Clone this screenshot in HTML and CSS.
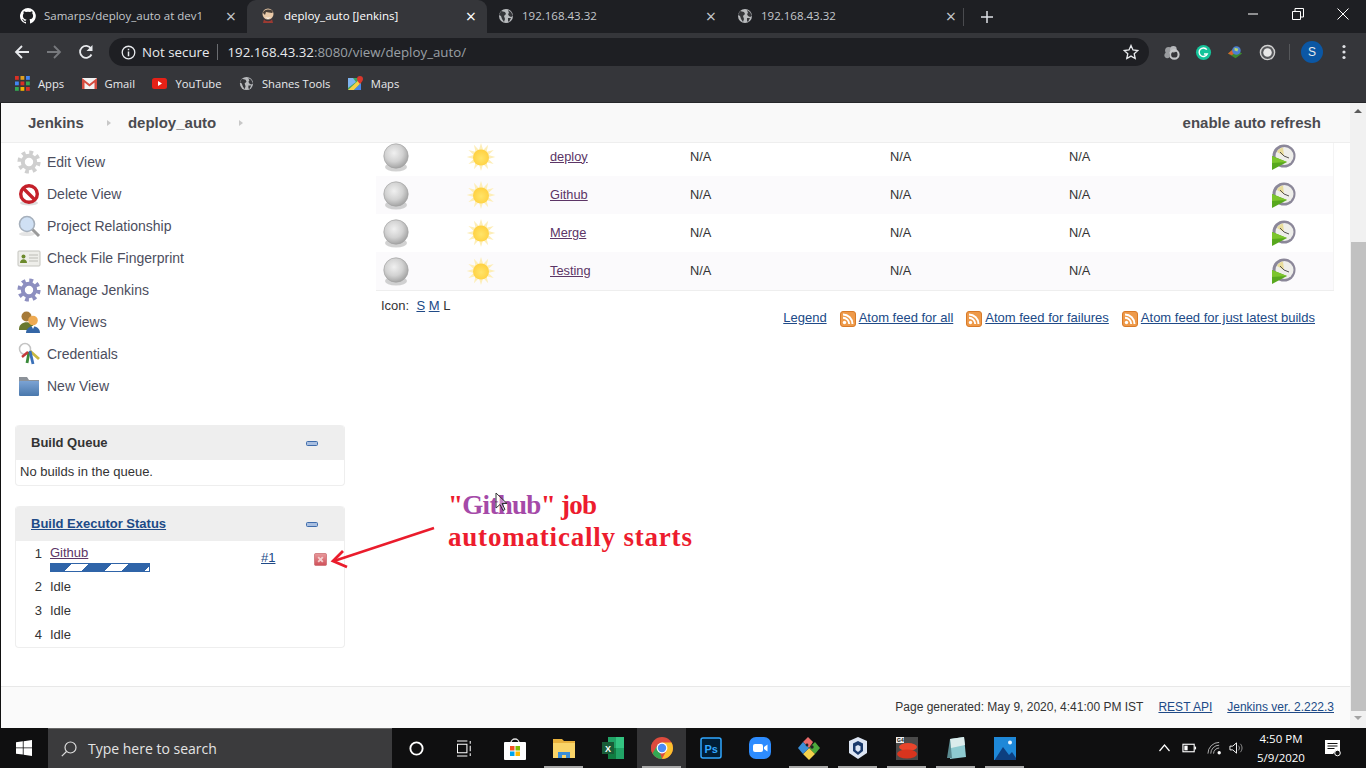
FILE: index.html
```html
<!DOCTYPE html>
<html lang="en">
<head>
  <meta charset="UTF-8">
  <title>deploy_auto [Jenkins]</title>
  <link rel="stylesheet" href="styles.css">
</head>
<body>
<svg class="defs">
  <defs>
    <radialGradient id="ballGrad" cx="42%" cy="38%" r="65%"><stop offset="0" stop-color="#f0f0f0"/><stop offset="0.55" stop-color="#d2d2d2"/><stop offset="1" stop-color="#a0a0a0"/></radialGradient>
    <radialGradient id="sunGrad" cx="50%" cy="55%" r="55%"><stop offset="0" stop-color="#ffe468"/><stop offset="1" stop-color="#ffd040"/></radialGradient>
    <linearGradient id="folderGrad" x1="0" y1="0" x2="0" y2="1"><stop offset="0" stop-color="#7ba3d4"/><stop offset="1" stop-color="#4a78ac"/></linearGradient>
    <linearGradient id="stopGrad" x1="0" y1="0" x2="0" y2="1"><stop offset="0" stop-color="#e89a9c"/><stop offset="1" stop-color="#cf4f58"/></linearGradient>
    <symbol id="globe" viewBox="0 0 16 16">
      <circle cx="8" cy="8" r="7" fill="#b8babd"/>
      <path d="M3 3l4 1 1 2-2 2 1 3-1 3-2-3-1-3-2-1zM10 2l3 2 2 4-2 1-2-1-1-2 1-1zM10 10l3 0-2 4-1-1z" fill="#35363a"/>
    </symbol>
    <symbol id="gear" viewBox="0 0 24 24">
      <circle cx="12" cy="12" r="9.400" fill="none" stroke="currentColor" stroke-width="4.400" stroke-dasharray="3.700 3.680"/>
      <circle cx="12" cy="12" r="6.200" fill="none" stroke="currentColor" stroke-width="4"/>
      <circle cx="12" cy="12" r="3.600" fill="#fff"/>
    </symbol>
    <symbol id="ball" viewBox="0 0 26 29">
      <ellipse cx="13" cy="24" rx="11" ry="4.500" fill="#b4b4b4" opacity="0.600"/>
      <circle cx="13" cy="13" r="12.200" fill="url(#ballGrad)" stroke="#a4a4a4" stroke-width="0.700"/>
    </symbol>
    <symbol id="sun" viewBox="0 0 30 30">
      <path d="M15 1l2.200 7 5-5.200-1.600 7 7.100-1.800-5.300 5 7 2-7 2 5.300 5-7.100-1.800 1.600 7-5-5.200-2.200 7-2.100-7-5 5.200 1.600-7-7.100 1.800 5.300-5-7-2 7-2-5.300-5 7.100 1.800-1.600-7 5 5.200z" fill="#fdeeb8"/>
      <circle cx="15" cy="15.500" r="8" fill="url(#sunGrad)"/>
    </symbol>
    <symbol id="clock" viewBox="0 0 26 26">
      <circle cx="13" cy="12" r="11.500" fill="#8b8799"/>
      <circle cx="13.500" cy="12" r="9" fill="#eeeeea"/>
      <path d="M13 12L12 3.500A8.500 8.500 0 0 0 6 8z" fill="#e8dc9a"/>
      <path d="M13 12L9 8M13 12l5 2" stroke="#55524f" stroke-width="1"/>
      <path d="M1 12l15 6L1 26z" fill="#58a81e"/>
      <path d="M1 12l15 6-15 1z" fill="#7cc52c"/>
    </symbol>
    <symbol id="atom" viewBox="0 0 16 16">
      <rect x="0.500" y="0.500" width="15" height="15" rx="2.500" fill="#ee9a4a" stroke="#d87a28"/>
      <circle cx="4.500" cy="11.500" r="1.700" fill="#fff"/>
      <path d="M3 6.800a6.200 6.200 0 0 1 6.200 6.200M3 3.500a9.500 9.500 0 0 1 9.500 9.500" fill="none" stroke="#fff" stroke-width="1.900"/>
    </symbol>
    <symbol id="minus" viewBox="0 0 12 5">
      <rect x="0.500" y="0.500" width="11" height="4" rx="1" fill="#a9bfe0" stroke="#3f6cab"/>
    </symbol>
  </defs>
</svg>

<div class="screen">
  <div class="tabstrip">
    <div class="tab">
      <svg class="tab-icon" viewBox="0 0 16 16"><path fill="#fff" d="M8 0a8 8 0 0 0-2.500 15.600c.4.100.5-.200.500-.400v-1.400c-2.200.5-2.700-1-2.700-1-.4-.900-.9-1.200-.9-1.200-.7-.500.100-.5.100-.5.800.100 1.200.8 1.200.8.700 1.200 1.900.9 2.300.7.100-.5.300-.9.500-1.100-1.800-.2-3.600-.9-3.600-4 0-.9.300-1.600.8-2.100-.1-.2-.4-1 .1-2.100 0 0 .7-.2 2.200.8a7.500 7.500 0 0 1 4 0c1.500-1 2.200-.8 2.200-.8.400 1.100.2 1.900.1 2.100.5.600.8 1.300.8 2.100 0 3.100-1.900 3.700-3.700 3.900.3.300.6.800.6 1.500v2.200c0 .2.100.5.600.4A8 8 0 0 0 8 0z"/></svg>
      <span class="tab-title">Samarps/deploy_auto at dev1</span>
      <span class="tab-close">×</span>
    </div>
    <div class="tab tab-active">
      <svg class="tab-icon" viewBox="0 0 16 16"><circle cx="8" cy="6" r="5.500" fill="#e8c9a8"/><path d="M3 5c0-4 9-5 10-1l-1 1-6-1-1 3z" fill="#4a4038"/><path d="M4 11c1 3 7 3 8 0l1 4H3z" fill="#9c3a32"/><path d="M5 9c2 1 4 1 6 0l-3 2z" fill="#fff"/></svg>
      <span class="tab-title">deploy_auto [Jenkins]</span>
      <span class="tab-close">×</span>
    </div>
    <div class="tab">
      <svg class="tab-icon"><use href="#globe"/></svg>
      <span class="tab-title">192.168.43.32</span>
      <span class="tab-close">×</span>
    </div>
    <div class="tab tab-last">
      <svg class="tab-icon"><use href="#globe"/></svg>
      <span class="tab-title">192.168.43.32</span>
      <span class="tab-close">×</span>
    </div>
    <svg class="new-tab" viewBox="0 0 12 12"><path d="M6 0v12M0 6h12" stroke="#dee1e6" stroke-width="1.500"/></svg>
    <div class="win-controls">
      <svg viewBox="0 0 12 12"><path d="M1 6h10" stroke="#fff"/></svg>
      <svg viewBox="0 0 12 12"><path d="M.5 3.500h8v8h-8zM3 3.500V.5h8.500V9H8.500" fill="none" stroke="#fff"/></svg>
      <svg viewBox="0 0 12 12"><path d="M.5.500l11 11M11.500.500l-11 11" stroke="#fff"/></svg>
    </div>
  </div>

  <div class="toolbar">
    <svg class="nav-btn" viewBox="0 0 16 16"><path d="M15 8H2M8 2L2 8l6 6" fill="none" stroke="#e8eaed" stroke-width="1.800"/></svg>
    <svg class="nav-btn" viewBox="0 0 16 16"><path d="M1 8h13M8 2l6 6-6 6" fill="none" stroke="#77797d" stroke-width="1.800"/></svg>
    <svg class="nav-btn" viewBox="0 0 16 16"><path d="M13.500 10.500A6 6 0 1 1 13 4.500" fill="none" stroke="#e8eaed" stroke-width="1.800"/><path d="M14.500 1v6h-6z" fill="#e8eaed"/></svg>
    <div class="omnibox">
      <svg class="info-icon" viewBox="0 0 16 16"><circle cx="8" cy="8" r="6.700" fill="none" stroke="#e8eaed" stroke-width="1.400"/><path d="M8 7v5M8 4v1.700" stroke="#e8eaed" stroke-width="1.600"/></svg>
      <span class="not-secure">Not secure</span>
      <span class="url"><span class="url-host">192.168.43.32</span>:8080/view/deploy_auto/</span>
      <svg class="star" viewBox="0 0 16 16"><path d="M8 1.500l2 4.500 4.800.5-3.600 3.200 1 4.800L8 12.100l-4.200 2.400 1-4.800L1.200 6.500 6 6z" fill="none" stroke="#e8eaed" stroke-width="1.300"/></svg>
    </div>
    <div class="extensions">
      <svg viewBox="0 0 18 18"><circle cx="6" cy="7" r="3.800" fill="#9a9c9f"/><circle cx="11" cy="5.500" r="3.500" fill="#b5b7ba"/><circle cx="12" cy="11" r="4.500" fill="none" stroke="#c4c6c9" stroke-width="2.200"/><circle cx="4.500" cy="12" r="3" fill="#9a9c9f"/></svg>
      <svg viewBox="0 0 18 18"><circle cx="9" cy="9" r="8" fill="#15c39a"/><path d="M12.500 6A4.500 4.500 0 1 0 13 10.500H9.500" fill="none" stroke="#fff" stroke-width="1.500"/></svg>
      <svg viewBox="0 0 18 18"><path d="M1 10l6-5 9 5-7 5z" fill="#3c8a2e"/><path d="M1 10l6-5 2 4-4 3z" fill="#d8632a"/><circle cx="10" cy="7" r="4.500" fill="#4c7fd0"/><path d="M8 4l4 1-1 3-3-1z" fill="#b8d870"/></svg>
      <svg class="ext-last" viewBox="0 0 18 18"><circle cx="9" cy="9" r="7.500" fill="#55575a" stroke="#d0d0d0" stroke-width="1.500"/><circle cx="9" cy="9" r="4.500" fill="#e8e8e8"/></svg>
      <span class="ext-sep"></span>
      <span class="avatar">S</span>
      <svg class="menu-dots" viewBox="0 0 4 16"><circle cx="2" cy="2.500" r="1.600" fill="#dfe1e5"/><circle cx="2" cy="8" r="1.600" fill="#dfe1e5"/><circle cx="2" cy="13.500" r="1.600" fill="#dfe1e5"/></svg>
    </div>
  </div>

  <div class="bookmarks">
    <span class="bookmark">
      <svg viewBox="0 0 15 15"><rect width="3.800" height="3.800" x="0" y="0" fill="#d93025"/><rect width="3.800" height="3.800" x="5.500" y="0" fill="#e0a020"/><rect width="3.800" height="3.800" x="11" y="0" fill="#4285f4"/><rect width="3.800" height="3.800" x="0" y="5.500" fill="#4285f4"/><rect width="3.800" height="3.800" x="5.500" y="5.500" fill="#d93025"/><rect width="3.800" height="3.800" x="11" y="5.500" fill="#34a853"/><rect width="3.800" height="3.800" x="0" y="11" fill="#34a853"/><rect width="3.800" height="3.800" x="5.500" y="11" fill="#f4b400"/><rect width="3.800" height="3.800" x="11" y="11" fill="#d93025"/></svg>
      Apps
    </span>
    <span class="bookmark">
      <svg viewBox="0 0 15 15"><rect x="0" y="2" width="15" height="11" fill="#f2f2f2"/><path d="M0 2l7.500 6L15 2v11h-2.500V6.500L7.500 10.500 2.500 6.500V13H0z" fill="#d54c3f"/></svg>
      Gmail
    </span>
    <span class="bookmark">
      <svg viewBox="0 0 15 15"><rect x="0" y="2" width="15" height="11" rx="2.500" fill="#e62117"/><path d="M6 5l4 2.500L6 10z" fill="#fff"/></svg>
      YouTube
    </span>
    <span class="bookmark">
      <svg viewBox="0 0 16 16"><use href="#globe"/></svg>
      Shanes Tools
    </span>
    <span class="bookmark">
      <svg viewBox="0 0 15 15"><rect x="0" y="2" width="13" height="12" fill="#3fa45b"/><path d="M0 14L13 2v5L6 14z" fill="#f7d046"/><path d="M0 2h5l3 4-8 6z" fill="#7fb4f0"/><path d="M6 14l7-7v7z" fill="#4a86e8"/><path d="M12 0a3 3 0 0 1 3 3c0 2-3 5-3 5S9 5 9 3a3 3 0 0 1 3-3z" fill="#d8382c"/></svg>
      Maps
    </span>
  </div>

  <div class="page">
    <div class="page-main">
      <div class="breadcrumbs">
        <span class="crumb">Jenkins</span>
        <span class="crumb-arrow"></span>
        <span class="crumb">deploy_auto</span>
        <span class="crumb-arrow"></span>
        <span class="auto-refresh">enable auto refresh</span>
      </div>

      <div class="page-body">
        <div class="side-panel">
          <ul class="tasks">
            <li><svg class="task-icon icon-grey"><use href="#gear"/></svg>Edit View</li>
            <li>
              <svg class="task-icon" viewBox="0 0 24 24"><ellipse cx="12" cy="21" rx="9" ry="2.500" fill="#ddd"/><circle cx="12" cy="12" r="8.300" fill="#fff" stroke="#c4202a" stroke-width="3.400"/><path d="M6 6l12 12" stroke="#c4202a" stroke-width="3.400"/></svg>
              Delete View
            </li>
            <li>
              <svg class="task-icon" viewBox="0 0 24 24"><ellipse cx="10" cy="20" rx="8" ry="2" fill="#e4e4e4"/><path d="M15 15l7 7" stroke="#9a9a9a" stroke-width="3"/><circle cx="10" cy="10" r="7.500" fill="#cfe0f4" stroke="#a6b0bc" stroke-width="1.600"/></svg>
              Project Relationship
            </li>
            <li>
              <svg class="task-icon" viewBox="0 0 24 24"><rect x="1" y="5" width="22" height="15" rx="1" fill="#eeeeea" stroke="#c4c4be"/><circle cx="6.500" cy="10.500" r="2" fill="#6c8a2c"/><path d="M3 17c0-5 7-5 7 0z" fill="#6c8a2c"/><path d="M12 9h9M12 12h9M12 15h9" stroke="#bcbcb6"/></svg>
              Check File Fingerprint
            </li>
            <li><svg class="task-icon icon-purple"><use href="#gear"/></svg>Manage Jenkins</li>
            <li>
              <svg class="task-icon" viewBox="0 0 24 24"><circle cx="9.500" cy="6.500" r="5" fill="#a67a38"/><path d="M2 19c0-9 15-9 15 0v1H2z" fill="#68782e"/><circle cx="16" cy="10.500" r="4.800" fill="#eeaa52"/><path d="M9 23c0-9 14-9 14 0z" fill="#3466a6"/><path d="M14.500 16l1.500 3 1.500-3z" fill="#fff"/></svg>
              My Views
            </li>
            <li>
              <svg class="task-icon" viewBox="0 0 24 24"><circle cx="8" cy="7" r="5.500" fill="none" stroke="#c4c4c4" stroke-width="1.500"/><path d="M13 9l9 8" stroke="#c8b840" stroke-width="2.800"/><path d="M12 10l-2 11" stroke="#3a8a3a" stroke-width="2.800"/><path d="M13 9l3 13" stroke="#3a70b8" stroke-width="2.800"/><path d="M11 10l-6 5" stroke="#c43a3a" stroke-width="2.400"/></svg>
              Credentials
            </li>
            <li>
              <svg class="task-icon" viewBox="0 0 24 24"><path d="M2 3h8l2 3h10v3H2z" fill="#8c9299"/><rect x="2" y="7" width="20" height="15" rx="1" fill="url(#folderGrad)"/></svg>
              New View
            </li>
          </ul>

          <div class="pane">
            <div class="pane-header">
              <span class="pane-title">Build Queue</span>
              <svg class="pane-toggle"><use href="#minus"/></svg>
            </div>
            <div class="queue-text">No builds in the queue.</div>
          </div>

          <div class="pane">
            <div class="pane-header">
              <a class="pane-title pane-link">Build Executor Status</a>
              <svg class="pane-toggle"><use href="#minus"/></svg>
            </div>
            <div class="executors">
              <div class="executor executor-busy">
                <span class="exec-num">1</span>
                <div class="exec-job">
                  <a class="job-link">Github</a>
                  <div class="progress"></div>
                </div>
                <a class="exec-build">#1</a>
                <svg class="exec-stop" viewBox="0 0 14 14"><rect x="0.500" y="0.500" width="13" height="13" rx="1.500" fill="url(#stopGrad)" stroke="#cf7a80"/><path d="M4.500 4.500l5 5M9.500 4.500l-5 5" stroke="#f4d0d0" stroke-width="2"/></svg>
              </div>
              <div class="executor"><span class="exec-num">2</span><span>Idle</span></div>
              <div class="executor"><span class="exec-num">3</span><span>Idle</span></div>
              <div class="executor"><span class="exec-num">4</span><span>Idle</span></div>
            </div>
          </div>
        </div>

        <div class="main-panel">
          <table class="projects">
            <colgroup>
              <col class="col-icon"><col class="col-icon"><col class="col-name">
              <col class="col-success"><col class="col-fail"><col class="col-duration"><col class="col-build">
            </colgroup>
            <tr>
              <td><svg class="ball"><use href="#ball"/></svg></td>
              <td><svg class="sun"><use href="#sun"/></svg></td>
              <td><a class="job-link">deploy</a></td>
              <td>N/A</td><td>N/A</td><td>N/A</td>
              <td><svg class="clock"><use href="#clock"/></svg></td>
            </tr>
            <tr class="row-alt">
              <td><svg class="ball"><use href="#ball"/></svg></td>
              <td><svg class="sun"><use href="#sun"/></svg></td>
              <td><a class="job-link">Github</a></td>
              <td>N/A</td><td>N/A</td><td>N/A</td>
              <td><svg class="clock"><use href="#clock"/></svg></td>
            </tr>
            <tr>
              <td><svg class="ball"><use href="#ball"/></svg></td>
              <td><svg class="sun"><use href="#sun"/></svg></td>
              <td><a class="job-link">Merge</a></td>
              <td>N/A</td><td>N/A</td><td>N/A</td>
              <td><svg class="clock"><use href="#clock"/></svg></td>
            </tr>
            <tr class="row-alt">
              <td><svg class="ball"><use href="#ball"/></svg></td>
              <td><svg class="sun"><use href="#sun"/></svg></td>
              <td><a class="job-link">Testing</a></td>
              <td>N/A</td><td>N/A</td><td>N/A</td>
              <td><svg class="clock"><use href="#clock"/></svg></td>
            </tr>
          </table>
          <div class="icon-size">Icon:&nbsp; <a>S</a> <a>M</a> <span>L</span></div>
          <div class="feeds">
            <a class="legend">Legend</a>
            <span class="feed"><svg class="atom"><use href="#atom"/></svg><a>Atom feed for all</a></span>
            <span class="feed"><svg class="atom"><use href="#atom"/></svg><a>Atom feed for failures</a></span>
            <span class="feed"><svg class="atom"><use href="#atom"/></svg><a>Atom feed for just latest builds</a></span>
          </div>
        </div>
      </div>

      <div class="page-footer">
        <span>Page generated: May 9, 2020, 4:41:00 PM IST</span>
        <a>REST API</a>
        <a>Jenkins ver. 2.222.3</a>
      </div>
    </div>

    <div class="scrollbar">
      <span class="scroll-up"></span>
      <span class="scroll-thumb"></span>
      <span class="scroll-down"></span>
    </div>

    <div class="note">
      <div class="note-first">"<span class="note-job">Github</span>" job</div>
      <div class="note-second">automatically starts</div>
    </div>
    <svg class="note-arrow" viewBox="0 0 110 50"><path d="M104 5L4 38" stroke="#ea1c2c" stroke-width="2.400"/><path d="M13 28L3 38l14 6" fill="none" stroke="#ea1c2c" stroke-width="2.800"/></svg>
    <svg class="cursor" viewBox="0 0 12 20"><path d="M1 1v15l4-3.500 3 6 2-1-3-6h5z" fill="#fff" fill-opacity="0.350" stroke="#333" stroke-width="1"/></svg>
  </div>

  <div class="taskbar">
    <div class="start">
      <svg viewBox="0 0 16 16"><path fill="#fff" d="M0 2.200l6.800-.9v6.200H0zM7.600 1.200L16 0v7.500H7.600zM0 8.300h6.800v6.300L0 13.700zM7.600 8.300H16V16l-8.400-1.200z"/></svg>
    </div>
    <div class="search">
      <svg viewBox="0 0 16 16"><circle cx="9.500" cy="6.500" r="5.500" fill="none" stroke="#ddd" stroke-width="1.200"/><path d="M5.500 10.500L.8 15.200" stroke="#ddd" stroke-width="1.200"/></svg>
      Type here to search
    </div>
    <div class="task-app task-small"><svg viewBox="0 0 18 18"><circle cx="9" cy="9" r="6.500" fill="none" stroke="#fff" stroke-width="2"/></svg></div>
    <div class="task-app task-small"><svg viewBox="0 0 18 18"><path d="M0 1h11M0 17h11M.5 4.500h10v9H.5zM14 1v3M14 6v6M14 14v3" fill="none" stroke="#fff" stroke-width="1.100"/></svg></div>
    <div class="task-app"><svg viewBox="0 0 24 24"><path d="M8 7a4 4 0 0 1 8 0" fill="none" stroke="#ddd" stroke-width="1.400"/><rect x="1" y="6" width="22" height="18" rx="1" fill="#fff"/><rect x="7" y="10" width="4.500" height="4.500" fill="#f25022"/><rect x="12.500" y="10" width="4.500" height="4.500" fill="#7fba00"/><rect x="7" y="15.500" width="4.500" height="4.500" fill="#00a4ef"/><rect x="12.500" y="15.500" width="4.500" height="4.500" fill="#ffb900"/></svg></div>
    <div class="task-app task-open"><svg viewBox="0 0 24 24"><path d="M1 3h9l2 2h11v17H1z" fill="#e8b13c"/><rect x="1" y="7" width="22" height="15" fill="#f9d468"/><rect x="6" y="16" width="12" height="6" fill="#3a8ed8"/><rect x="10" y="19" width="4" height="3" fill="#f9d468"/></svg></div>
    <div class="task-app"><svg viewBox="0 0 24 24"><rect x="7" y="1" width="16" height="22" fill="#21a366"/><rect x="15" y="1" width="8" height="11" fill="#33c481"/><rect x="7" y="12" width="8" height="11" fill="#107c41"/><rect x="1" y="6" width="12" height="12" fill="#185c37"/><text x="7" y="15.500" class="excel-x">X</text></svg></div>
    <div class="task-app task-active task-open">
      <svg viewBox="0 0 24 24"><circle cx="12" cy="12" r="11" fill="#dd4b3e"/><path d="M12 12L2.500 17.500A11 11 0 0 1 3 6z" fill="#dd4b3e"/><path d="M12 23A11 11 0 0 1 2.500 17.500L7.500 9l4.500 14z" fill="#34a853"/><path d="M12 23A11 11 0 0 0 23 12a11 11 0 0 0-1.500-5.500H12l4.500 8z" fill="#fbc02d"/><circle cx="12" cy="12" r="5.400" fill="#fff"/><circle cx="12" cy="12" r="4.200" fill="#4b8bf5"/></svg>
    </div>
    <div class="task-app"><svg viewBox="0 0 24 24"><rect x="2" y="2" width="20" height="20" rx="2" fill="#001e36" stroke="#31a8ff" stroke-width="1.500"/><text x="5.500" y="16.500" class="ps-text">Ps</text></svg></div>
    <div class="task-app"><svg viewBox="0 0 24 24"><rect x="1" y="1" width="22" height="22" rx="7" fill="#2d8cff"/><rect x="5" y="8" width="10" height="8" rx="2" fill="#fff"/><path d="M16 11l3.500-2.500v7L16 13z" fill="#fff"/></svg></div>
    <div class="task-app task-open"><svg viewBox="0 0 24 24"><path d="M12 12L6 6l5-5 5 5z" fill="#ea6a6a"/><path d="M12 12l6-6 5 6-5 6z" fill="#4da83c"/><path d="M12 12l6 6-6 6-6-6z" fill="#f3d24c"/><path d="M12 12l-6 6-5-6 5-6z" fill="#3a8ed8"/><circle cx="15" cy="11" r="1.700" fill="#222"/><circle cx="10" cy="9" r="1.400" fill="#222"/></svg></div>
    <div class="task-app task-open"><svg viewBox="0 0 24 24"><path d="M12 1l9 4v12l-9 6-9-6V5z" fill="#dde6f4"/><path d="M12 5l5 2.500V15l-5 4-5-4V7.500z" fill="#1a3a6c"/><path d="M12 9l2.500 1.200V14L12 16l-2.500-2v-3.800z" fill="#dde6f4"/></svg></div>
    <div class="task-app task-open"><svg viewBox="0 0 24 24"><rect x="1" y="1" width="22" height="23" fill="#4a4a4a"/><ellipse cx="13" cy="11" rx="9" ry="4" fill="#e8452c"/><ellipse cx="12" cy="18" rx="10" ry="4.500" fill="#d8341e"/><rect x="1" y="1" width="8" height="6" fill="#eee"/><text x="2" y="6" class="gs-text">G4</text></svg></div>
    <div class="task-app task-open"><svg viewBox="0 0 24 24"><path d="M6 3l14-2 2 20-16 2z" fill="#8ecad0"/><path d="M6 3l14-2 1 8-14 3z" fill="#dcecec"/><path d="M3 22L6 3l2 19z" fill="#5a8a90"/></svg></div>
    <div class="task-app task-open"><svg viewBox="0 0 24 24"><rect x="1" y="1" width="22" height="24" fill="#1e88d8"/><path d="M1 25l9-14 6 8 3-3 4 6v3z" fill="#0d3f80"/><circle cx="17" cy="6.500" r="2" fill="#e8f4ff"/></svg></div>
    <div class="tray">
      <svg class="tray-icon" viewBox="0 0 14 14"><path d="M2 10l5-6 5 6" fill="none" stroke="#fff" stroke-width="1.200"/></svg>
      <svg class="tray-icon" viewBox="0 0 16 14"><rect x="1" y="3" width="12" height="8" fill="none" stroke="#fff" stroke-width="1.200"/><rect x="2.500" y="4.500" width="3.500" height="5" fill="#fff"/><rect x="13.500" y="5.500" width="1.500" height="3" fill="#fff"/></svg>
      <svg class="tray-icon tray-wifi" viewBox="0 0 16 14"><path d="M1 13A12 12 0 0 1 13 1M4 13a9 9 0 0 1 9-9M7 13a6 6 0 0 1 6-6" fill="none" stroke="#b8b8b8"/><circle cx="13" cy="12" r="1.800" fill="#fff"/></svg>
      <svg class="tray-icon" viewBox="0 0 16 14"><path d="M1 5h3l4-3.500v11L4 9H1z" fill="none" stroke="#fff"/><path d="M10 4.500c1.500 1.500 1.500 3.500 0 5M12 2.500c2.500 2.500 2.500 6.500 0 9" fill="none" stroke="#999"/></svg>
      <div class="clock-text"><span>4:50 PM</span><span>5/9/2020</span></div>
      <svg class="notify" viewBox="0 0 18 18"><path d="M1 1h15v12h-4v-1.500L9 15H1z" fill="#fff"/><path d="M3.500 4.500h10M3.500 7h10M3.500 9.500h7" stroke="#111"/><circle cx="13.500" cy="14" r="2.800" fill="#111" stroke="#fff"/></svg>
    </div>
  </div>
</div>
</body>
</html>
```

FILE: styles.css
```css
html, body {
  margin: 0;
  padding: 0;
  overflow: hidden;
}
body {
  font-family: "Liberation Sans", Arial, sans-serif;
  color: #333;
  background-color: #fff;
}
.defs {
  position: absolute;
  width: 0;
  height: 0;
}
.screen {
  display: flex;
  flex-direction: column;
  width: 1366px;
  height: 768px;
  overflow: hidden;
}

/* browser tabs */
.tabstrip {
  display: flex;
  align-items: stretch;
  height: 33px;
  background-color: #1e1f23;
  font-family: "Open Sans", "Noto Sans", sans-serif;
  font-size: 11.500px;
  color: #c4c7cb;
}
.tab {
  display: flex;
  align-items: center;
  box-sizing: border-box;
  width: 240px;
  padding: 0 8px 2px 11px;
}
.tab:first-child {
  width: 247px;
  padding-left: 20px;
}
.tab-active {
  padding-left: 13px;
  border-radius: 9px 9px 0 0;
  background-color: #35363a;
  color: #fff;
}
.tab-last {
  position: relative;
  padding-left: 10px;
}
.tab-last::after {
  content: "";
  position: absolute;
  right: 3px;
  top: 8px;
  width: 1px;
  height: 18px;
  background-color: #4a4b4f;
}
.tab-icon {
  flex: none;
  width: 16px;
  height: 16px;
  margin-right: 8px;
}
.tab-title {
  flex: 1;
  white-space: nowrap;
  overflow: hidden;
}
.tab-close {
  margin-right: 3px;
  font-size: 18px;
  line-height: 16px;
}
.new-tab {
  width: 12px;
  height: 12px;
  margin: 11px 0 0 14px;
}
.win-controls {
  display: flex;
  gap: 33px;
  margin: 8px 17px 0 auto;
}
.win-controls svg {
  width: 12px;
  height: 12px;
}

/* address bar */
.toolbar {
  display: flex;
  align-items: center;
  height: 38px;
  background-color: #35363a;
}
.nav-btn {
  width: 16px;
  height: 16px;
  margin-left: 14px;
  margin-right: 2px;
}
.omnibox {
  display: flex;
  align-items: center;
  box-sizing: border-box;
  width: 1040px;
  height: 28px;
  margin-left: 13px;
  padding: 0 10px 0 12px;
  border-radius: 14px;
  background-color: #1e1f23;
  font-family: "Open Sans", "Noto Sans", sans-serif;
  font-size: 13.300px;
  color: #9aa0a6;
}
.info-icon {
  width: 15px;
  height: 15px;
  margin-right: 6px;
}
.not-secure {
  padding-right: 8px;
  border-right: 1px solid #6a6c70;
  color: #e8eaed;
  line-height: 16px;
}
.url {
  margin-left: 9px;
}
.url-host {
  color: #e8eaed;
}
.star {
  width: 16px;
  height: 16px;
  margin-left: auto;
}
.extensions {
  display: flex;
  align-items: center;
  margin-left: 14px;
}
.extensions svg {
  width: 17px;
  height: 17px;
  margin-right: 15px;
}
.extensions .ext-last {
  margin-right: 13px;
}
.ext-sep {
  width: 1px;
  height: 16px;
  margin: 0 11px 0 0;
  background-color: #55575a;
}
.avatar {
  width: 22px;
  height: 22px;
  border-radius: 50%;
  background-color: #0b57a4;
  color: #e8eaed;
  font-size: 12px;
  line-height: 22px;
  text-align: center;
}
.extensions .menu-dots {
  width: 4px;
  height: 16px;
  margin: 0 0 0 19px;
}

/* bookmarks */
.bookmarks {
  display: flex;
  align-items: center;
  gap: 17.500px;
  box-sizing: border-box;
  height: 32px;
  padding: 0 0 6px 15px;
  background-color: #35363a;
  border-bottom: 1px solid #26272a;
  font-family: "Open Sans", "Noto Sans", sans-serif;
  font-size: 11.200px;
  color: #e8eaed;
}
.bookmark {
  display: flex;
  align-items: center;
  gap: 8px;
}
.bookmark svg {
  width: 15px;
  height: 15px;
}

/* jenkins page */
.page {
  position: relative;
  display: flex;
  flex: 1;
  min-height: 0;
  border-left: 1px solid #111;
}
.page-main {
  display: flex;
  flex-direction: column;
  flex: 1;
  min-width: 0;
  background-color: #fff;
}
.breadcrumbs {
  position: relative;
  z-index: 1;
  display: flex;
  align-items: center;
  flex: none;
  height: 40px;
  box-sizing: border-box;
  padding: 0 29px 0 27px;
  background-color: #f9f9f9;
  border-bottom: 1px solid #eeeeee;
  font-weight: bold;
  font-size: 15px;
  color: #4b4b50;
}
.crumb-arrow {
  width: 0;
  height: 0;
  margin: 0 17px 0 23px;
  border-left: 4px solid #c8c8c8;
  border-top: 3.500px solid transparent;
  border-bottom: 3.500px solid transparent;
}
.auto-refresh {
  margin-left: auto;
}
.page-body {
  display: flex;
  flex: 1;
  min-height: 0;
  overflow: hidden;
}

.side-panel {
  flex: none;
  width: 344px;
  box-sizing: border-box;
  padding: 3px 0 0 14px;
}
.tasks {
  margin: 0 0 23px;
  padding: 0;
  list-style: none;
}
.tasks li {
  display: flex;
  align-items: center;
  height: 32px;
  font-size: 14px;
  color: #4c4e5e;
}
.task-icon {
  width: 24px;
  height: 24px;
  margin: 0 6px 0 2px;
}
.icon-grey {
  color: #cfcfcf;
}
.icon-purple {
  color: #8d8fc0;
}
.pane {
  margin-bottom: 20px;
  border: 1px solid #eeeeee;
  border-top: none;
  border-radius: 4px;
  font-size: 13px;
}
.pane-header {
  display: flex;
  align-items: center;
  justify-content: space-between;
  height: 35px;
  box-sizing: border-box;
  padding: 0 26px 0 15px;
  border-radius: 4px 4px 0 0;
  background-color: #eeeeee;
}
.pane-title {
  font-weight: bold;
  font-size: 13px;
  color: #333;
}
.pane-link {
  color: #204a87;
  text-decoration: underline;
}
.pane-toggle {
  width: 12px;
  height: 5px;
  margin-top: 2px;
}
.queue-text {
  padding: 5px 4px 6px;
  line-height: 14px;
}
.executors {
  padding-top: 2px;
  padding-bottom: 1px;
}
.executor {
  display: flex;
  align-items: center;
  height: 24px;
}
.executor-busy {
  align-items: flex-start;
  height: 31px;
}
.exec-num {
  flex: none;
  width: 26px;
  margin-right: 8px;
  text-align: right;
}
.executor-busy .exec-num {
  margin-top: 3px;
}
.job-link {
  color: #5c3566;
  text-decoration: underline;
}
.exec-job {
  width: 211px;
  padding-top: 3px;
  line-height: 14px;
}
.progress {
  box-sizing: border-box;
  width: 100px;
  height: 9px;
  margin-top: 3px;
  border: 1px solid #2f64a8;
  background: repeating-linear-gradient(-45deg, #fff 0, #fff 3.500px, #2f64a8 3.500px, #2f64a8 19.100px, #fff 19.100px, #fff 28.280px);
}
.exec-build {
  width: 53px;
  margin-top: 7px;
  color: #204a87;
  text-decoration: underline;
}
.exec-stop {
  width: 13px;
  height: 13px;
  margin-top: 10px;
}

.main-panel {
  flex: 1;
  min-width: 0;
  margin-top: -5px;
  padding-left: 31px;
  padding-right: 15px;
}
.projects {
  width: 957px;
  table-layout: fixed;
  border-collapse: collapse;
  border-bottom: 1px solid #eeeeee;
  border-right: 1px solid #f4f4f4;
  font-size: 12.800px;
}
.col-icon {
  width: 83px;
}
.col-name {
  width: 140px;
}
.col-success {
  width: 200px;
}
.col-fail {
  width: 179px;
}
.col-duration {
  width: 202px;
}
.col-build {
  width: 70px;
}
.projects td {
  height: 36px;
  padding: 0 8px 2px;
  vertical-align: middle;
}
.row-alt {
  background-color: #fbfafc;
}
.ball {
  display: block;
  width: 26px;
  height: 29px;
  margin-top: 2px;
  margin-left: -1px;
}
.sun {
  display: block;
  width: 30px;
  height: 30px;
  margin-top: 2px;
  margin-left: -1px;
}
.clock {
  display: block;
  width: 26px;
  height: 26px;
  margin-top: 2px;
}
.icon-size {
  margin: 8px 0 0 5px;
  font-size: 13px;
  line-height: 14px;
}
.icon-size a,
.feeds a,
.page-footer a {
  color: #204a87;
  text-decoration: underline;
}
.feeds {
  display: flex;
  justify-content: flex-end;
  align-items: center;
  gap: 13px;
  width: 939px;
  margin-top: -5px;
  font-size: 13px;
}
.feed {
  display: flex;
  align-items: center;
  gap: 3px;
}
.atom {
  width: 16px;
  height: 16px;
  margin-top: 3px;
}

.page-footer {
  display: flex;
  align-items: center;
  justify-content: flex-end;
  gap: 15px;
  flex: none;
  height: 42px;
  box-sizing: border-box;
  padding: 0 16px 2px 0;
  border-top: 1px solid #e8e8e8;
  background-color: #fafafa;
  font-size: 12px;
}

.scrollbar {
  display: flex;
  flex-direction: column;
  align-items: center;
  flex: none;
  width: 16px;
  background-color: #f1f1f1;
}
.scroll-up,
.scroll-down {
  width: 0;
  height: 0;
  border-left: 4px solid transparent;
  border-right: 4px solid transparent;
}
.scroll-up {
  margin-top: 6px;
  border-bottom: 4px solid #5a5a5a;
}
.scroll-down {
  margin-top: 5px;
  border-top: 4px solid #a3a3a3;
}
.scroll-thumb {
  width: 15px;
  height: 469px;
  margin-top: 129px;
  background-color: #c1c1c1;
}

/* annotation */
.note {
  position: absolute;
  left: 447px;
  top: 386px;
  font-family: "Liberation Serif", serif;
  font-weight: bold;
  font-size: 27px;
  line-height: 32px;
  color: #ed1c2e;
  white-space: nowrap;
}
.note-first {
  letter-spacing: -0.700px;
}
.note-second {
  letter-spacing: 0.800px;
}
.note-job {
  color: #a54aa8;
}
.note-arrow {
  position: absolute;
  left: 329px;
  top: 420px;
  width: 110px;
  height: 50px;
}
.cursor {
  position: absolute;
  left: 494px;
  top: 389px;
  width: 12px;
  height: 20px;
}

/* windows taskbar */
.taskbar {
  display: flex;
  align-items: stretch;
  flex: none;
  height: 40px;
  background-color: #0f0f10;
  color: #fff;
  font-family: "Open Sans", "Noto Sans", sans-serif;
}
.start {
  display: flex;
  align-items: center;
  justify-content: center;
  width: 48px;
}
.start svg {
  width: 16px;
  height: 16px;
}
.search {
  display: flex;
  align-items: center;
  gap: 11px;
  box-sizing: border-box;
  width: 344px;
  padding-left: 13px;
  background-color: #3b3b3d;
  border-top: 1px solid #666;
  font-size: 14px;
  color: #e4e4e4;
}
.search svg {
  width: 16px;
  height: 16px;
}
.task-app {
  position: relative;
  display: flex;
  align-items: center;
  justify-content: center;
  width: 49px;
}
.task-app svg {
  width: 24px;
  height: 24px;
}
.task-small svg {
  width: 17px;
  height: 17px;
}
.task-active {
  background-color: #343436;
}
.task-open::after {
  content: "";
  position: absolute;
  left: 5px;
  right: 5px;
  bottom: 0;
  height: 2px;
  background-color: #a8a8a8;
}
.excel-x {
  font-family: "Liberation Sans", sans-serif;
  font-size: 9px;
  font-weight: bold;
  fill: #fff;
  text-anchor: middle;
}
.ps-text {
  font-family: "Liberation Sans", sans-serif;
  font-size: 11px;
  font-weight: bold;
  fill: #31a8ff;
}
.gs-text {
  font-family: "Liberation Sans", sans-serif;
  font-size: 5px;
  font-weight: bold;
  fill: #111;
}
.tray {
  display: flex;
  align-items: center;
  margin-left: auto;
  padding-right: 24px;
}
.tray-icon {
  width: 15px;
  height: 14px;
  margin-right: 10px;
}
.tray-wifi {
  margin-right: 7px;
}
.clock-text {
  display: flex;
  flex-direction: column;
  align-items: center;
  width: 50px;
  margin-left: 2px;
  font-size: 11.500px;
  line-height: 19px;
}
.notify {
  width: 18px;
  height: 18px;
  margin-left: 18px;
}
```
